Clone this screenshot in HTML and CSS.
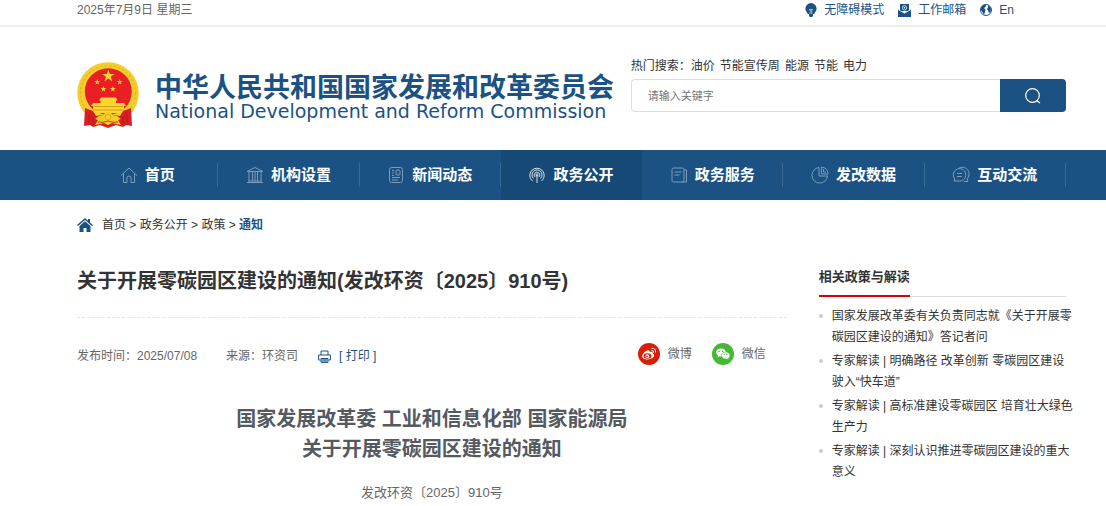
FILE: index.html
```html
<!DOCTYPE html>
<html lang="zh-CN">
<head>
    <meta charset="UTF-8">
    <meta name="viewport" content="width=device-width, initial-scale=1.0">
    <title>关于开展零碳园区建设的通知</title>
    <link rel="stylesheet" href="styles.css">
</head>
<body>
    <div class="topbar">
        <div class="container topbar-inner">
            <span>2025年7月9日 星期三</span>
            <div class="top-links">
                <a href="#">
                    <svg width="12" height="14" viewBox="0 0 12 14"><path fill="#1b5283" d="M6 0a5.600 5.600 0 0 1 5.600 5.600c0 2.200-1.400 3-2.300 5.400H2.700C1.800 8.600.4 7.800.4 5.600A5.600 5.600 0 0 1 6 0z"/><path fill="#1b5283" d="M4 11h4v2L7 14H5l-1-1z"/><path d="M4 6l1.200 1L6 6l.8 1L8 6M5.200 7v4M6.800 7v4" fill="none" stroke="#fff" stroke-width=".6"/></svg>
                    无障碍模式
                </a>
                <a href="#">
                    <svg width="13" height="13" viewBox="0 0 13 13"><path fill="#1b5283" d="M2 0h9v7H2zM0 5l6.500 4L13 5v8H0z"/><path d="M0 5.500l6.500 3.700L13 5.500" fill="none" stroke="#fff" stroke-width=".8"/><circle cx="6.500" cy="3.800" r="2.200" fill="none" stroke="#fff" stroke-width=".7"/><circle cx="6.500" cy="3.800" r=".8" fill="#fff"/></svg>
                    工作邮箱
                </a>
                <a href="#">
                    <svg width="12" height="12" viewBox="0 0 12 12"><circle cx="6" cy="6" r="5.500" fill="#fff" stroke="#1b5283"/><path fill="#1b5283" d="M1 3l3-2.500L6 1 5.500 3 4 4l1.500 1.500L5 8l-1 3-1-2-2-3zM8 1l3 3-.5 4L9 9 8 6.500 7 5l1-1.500z"/></svg>
                    En
                </a>
            </div>
        </div>
    </div>

    <header class="container header">
        <div class="logo">
            <svg class="emblem" width="62" height="66" viewBox="0 0 62 66">
                <circle cx="31" cy="31" r="30.800" fill="#f5ce2b"/>
                <circle cx="31" cy="31" r="27.500" fill="none" stroke="#e3b423" stroke-width="1.200" stroke-dasharray="2.500 2"/>
                <ellipse cx="31.300" cy="29.500" rx="23.500" ry="23.200" fill="#ea1f25"/>
                <g fill="#f9d72c">
                    <path id="star" d="M31.300 7.500l1.500 4.500h4.700l-3.800 2.800 1.400 4.600-3.800-2.800-3.800 2.800 1.400-4.600-3.800-2.800h4.700z"/>
                    <use href="#star" transform="translate(5.900 13.600) scale(.46)"/>
                    <use href="#star" transform="translate(28.300 13.600) scale(.46)"/>
                    <use href="#star" transform="translate(12 20.600) scale(.46)"/>
                    <use href="#star" transform="translate(21.500 20.600) scale(.46)"/>
                    <path d="M24 35.500h15l1.500 3H39V41h8l2 3h-2v4h6v3H10v-3h6v-4h-2l2-3h7.500v-2.500H22z"/>
                </g>
                <path d="M17 44.500h29M16 48h31" stroke="#cf8d17" stroke-width=".8"/>
                <path fill="#d81e22" d="M8 46l8 3 3 5 12-2 12 2 3-5 8-3 1 18-6-1-3 2-7-2-8 3-8-3-7 2-3-2-6 1z"/>
                <path fill="#f5ce2b" d="M22 54l-4 3 3 1-3 5 9-2 4 2 4-2 9 2-3-5 3-1-4-3-9-2z"/>
                <circle cx="31" cy="55" r="5" fill="#f5ce2b"/>
                <circle cx="31" cy="55" r="3" fill="none" stroke="#e3ab1f"/>
                <path d="M21 60q5 1 10-1 5 2 10 1M12 52v10M16 54v9M46 54v9M50 52v10" stroke="#b3181c" stroke-width=".8" fill="none"/>
            </svg>
            <div class="logo-text">
                <div class="logo-cn">中华人民共和国国家发展和改革委员会</div>
                <div class="logo-en">National Development and Reform Commission</div>
            </div>
        </div>
        <form class="search">
            <div class="hot">
                <span>热门搜索：</span>
                <a href="#">油价</a>
                <a href="#">节能宣传周</a>
                <a href="#">能源</a>
                <a href="#">节能</a>
                <a href="#">电力</a>
            </div>
            <div class="search-box">
                <input type="text" placeholder="请输入关键字" aria-label="请输入关键字">
                <button type="button" aria-label="搜索">
                    <svg width="16" height="16" viewBox="0 0 16 16" fill="none" stroke="#fff" stroke-width="1.200"><circle cx="7.500" cy="7.500" r="6.800"/><path d="M11.500 12.500l3.500 2.500"/></svg>
                </button>
            </div>
        </form>
    </header>

    <nav class="nav">
        <ul class="container">
            <li><a href="#">
                <svg width="18" height="18" viewBox="0 0 18 18"><path d="M1 9.500L9 2l8 7.500M3.500 8v8.500H7V12q0-2 2-2t2 2v4.500h3.500V8"/></svg>
                首页</a></li>
            <li><a href="#">
                <svg width="18" height="18" viewBox="0 0 18 18"><path d="M1 5.500L9 1.500l8 4zM3 6v9M6.500 6v9M9 6v9M11.500 6v9M15 6v9M2 15h14M1 16.500h16"/></svg>
                机构设置</a></li>
            <li><a href="#">
                <svg width="18" height="18" viewBox="0 0 18 18"><rect x="2.500" y="1.500" width="13" height="15" rx="2"/><path d="M5 4.500h2M5 7h2M5 9.500h2M5 11.500h8M5 14h6"/><rect x="9" y="4" width="4" height="5" rx="1"/></svg>
                新闻动态</a></li>
            <li class="active"><a href="#">
                <svg width="18" height="18" viewBox="0 0 18 18"><path d="M4.500 15A7.200 7.200 0 1 1 13.500 15M5.500 12.500a5 5 0 1 1 7 0M7 11a2.800 2.800 0 1 1 4 0M9 9v8"/><circle cx="9" cy="9" r="1"/></svg>
                政务公开</a></li>
            <li><a href="#">
                <svg width="18" height="18" viewBox="0 0 18 18"><rect x="2" y="2" width="12" height="14" rx="1.500"/><path d="M4.500 6h7M4.500 9h5M14 4h2.500v12H12"/></svg>
                政务服务</a></li>
            <li><a href="#">
                <svg width="18" height="18" viewBox="0 0 18 18"><path d="M8 1.500A7.800 7.800 0 1 0 16.500 10H8zM10.500 1v7H17q0-6-6.500-7zM12.500 3v3H15"/></svg>
                发改数据</a></li>
            <li><a href="#">
                <svg width="18" height="18" viewBox="0 0 18 18"><path d="M2.800 13A6.300 6.300 0 1 1 11.500 13.800Q10 15 8 15H2.200zM7 2.200C12-1 18 4 17 9q-.4 2.500-1.800 3.800l.8 2.700h-4M5 7.500h5M5 10.500h5"/></svg>
                互动交流</a></li>
        </ul>
    </nav>

    <div class="container breadcrumb">
        <svg width="16" height="14" viewBox="0 0 16 14"><path fill="#1b5283" d="M8 0l3 2.700V1h2v3.500L16 7l-1 1-7-6-7 6-1-1z"/><path fill="#1b5283" d="M8 3.200L13.500 8v6h-4v-4h-3v4h-4V8z"/></svg>
        <div><a href="#">首页</a> &gt; <a href="#">政务公开</a> &gt; <a href="#">政策</a> &gt; <a href="#" class="current">通知</a></div>
    </div>

    <div class="container main">
        <article>
            <h1>关于开展零碳园区建设的通知(发改环资〔2025〕910号)</h1>
            <div class="meta">
                <div class="info">
                    <span>发布时间：2025/07/08</span>
                    <span class="source">来源：环资司</span>
                    <a href="#" class="print">
                        <svg width="13" height="13" viewBox="0 0 13 13"><path d="M3 5V1h7v4M2.500 10H.6V5h11.800v5h-1.900M3 8.500h7v3.900H3z" fill="none" stroke="#1b5283"/><path d="M3 9h7v3H3z" fill="#6d93b5"/></svg>
                        [ 打印 ]
                    </a>
                </div>
                <div class="share">
                    <a href="#">
                        <svg width="22" height="22" viewBox="0 0 22 22"><circle cx="11" cy="11" r="11" fill="#d81e06"/><path fill="#fff" d="M9 7.500c2-.8 3 0 2.600 1.500 2.300-.8 3.800 0 3.200 1.600 2 .7 1.700 2.700.2 4-3 2.700-10.500 2.500-10.800-1.200C4 11.500 6.500 8.500 9 7.500z"/><ellipse cx="9.500" cy="13" rx="4" ry="2.700" fill="#d81e06"/><circle cx="9.300" cy="13.200" r="1.900" fill="#fff"/><circle cx="9" cy="13.500" r=".8" fill="#d81e06"/><path d="M13.500 5.500q4.500-.8 4 4M13.500 7.500q2.300-.3 2 2" fill="none" stroke="#fff"/></svg>
                        微博
                    </a>
                    <a href="#">
                        <svg width="22" height="22" viewBox="0 0 22 22"><circle cx="11" cy="11" r="11" fill="#43b934"/><path fill="#fff" d="M9 5.500c3 0 5 1.800 5 4s-2 4-5 4l-1.500-.2L5.500 14.500l.5-2C2.500 10 4 5.500 9 5.500z"/><path fill="#fff" stroke="#43b934" stroke-width=".6" d="M13.700 9c2.600 0 4.300 1.600 4.300 3.500 0 1.200-.7 2.200-1.600 2.800l.4 1.600-1.800-.9c-3.400.6-5.600-1.300-5.600-3.500S11.200 9 13.700 9z"/><g fill="#43b934"><circle cx="7.300" cy="8.400" r=".7"/><circle cx="10.600" cy="8.400" r=".7"/><circle cx="12.300" cy="11.600" r=".6"/><circle cx="15" cy="11.600" r=".6"/></g></svg>
                        微信
                    </a>
                </div>
            </div>
            <h2>国家发展改革委 工业和信息化部 国家能源局<br>关于开展零碳园区建设的通知</h2>
            <p class="doc-number">发改环资〔2025〕910号</p>
        </article>
        <aside>
            <div class="aside-title"><h3>相关政策与解读</h3></div>
            <ul class="related">
                <li><a href="#">国家发展改革委有关负责同志就《关于开展零碳园区建设的通知》答记者问</a></li>
                <li><a href="#">专家解读 | 明确路径 改革创新 零碳园区建设驶入“快车道”</a></li>
                <li><a href="#">专家解读 | 高标准建设零碳园区 培育壮大绿色生产力</a></li>
                <li><a href="#">专家解读 | 深刻认识推进零碳园区建设的重大意义</a></li>
            </ul>
        </aside>
    </div>
</body>
</html>
```
FILE: styles.css
```css
* {
    box-sizing: border-box;
}
body {
    font-family: "Liberation Sans", "Noto Sans CJK SC", sans-serif;
    font-size: 12px;
    line-height: 20px;
    margin: 0;
    color: #333;
    background: #fff;
}
a {
    color: inherit;
    text-decoration: none;
}
ul {
    list-style: none;
    margin: 0;
    padding: 0;
}
h1, h2, h3, p {
    margin: 0;
}
svg {
    flex: none;
}
.container {
    padding: 0 40px 0 77px;
}

/* 顶部 */
.topbar {
    border-bottom: 2px solid #e9eef2;
    color: #666;
}
.topbar-inner {
    display: flex;
    justify-content: space-between;
    padding-bottom: 5px;
}
.top-links {
    display: flex;
    gap: 14px;
    padding-right: 52px;
    color: #1b5283;
}
.top-links a {
    display: flex;
    align-items: center;
    gap: 7px;
}

/* 标志和搜索 */
.header {
    display: grid;
    grid-template-columns: 56% 44%;
    height: 123px;
    padding-top: 29px;
    align-items: start;
}
.logo {
    display: flex;
    gap: 16px;
    padding-top: 6px;
    color: #1b5283;
    white-space: nowrap;
}
.logo-text {
    padding-top: 12px;
}
.logo-cn {
    font-size: 27px;
    font-weight: bold;
    line-height: 28px;
}
.logo-en {
    font-family: "DejaVu Sans", sans-serif;
    font-size: 19px;
    line-height: 18px;
}
.hot {
    display: flex;
    gap: 5px;
    margin-bottom: 3px;
}
.hot span {
    margin-right: -5px;
}
.search-box {
    display: flex;
    height: 33px;
}
.search-box input {
    flex: 1;
    min-width: 0;
    padding: 0 16px;
    border: 1px solid #ddd;
    border-right: 0;
    border-radius: 4px 0 0 4px;
    font-family: inherit;
    font-size: 11px;
}
.search-box input::placeholder {
    color: #757575;
}
.search-box button {
    display: flex;
    align-items: center;
    justify-content: center;
    width: 66px;
    border: 0;
    border-radius: 0 4px 4px 0;
    background: #1b5283;
}

/* 导航 */
.nav {
    background: #1b5283;
}
.nav ul {
    display: grid;
    grid-template-columns: repeat(7, 1fr);
}
.nav li {
    display: flex;
    align-items: center;
    height: 50px;
}
.nav a {
    flex: 1;
    display: flex;
    align-items: center;
    justify-content: center;
    gap: 7px;
    height: 24px;
    border-right: 1px solid #3c6c96;
    color: #fff;
    font-size: 15px;
    font-weight: bold;
}
.nav svg {
    fill: none;
    stroke: #7c9dbb;
    stroke-width: 1;
}
.nav .active {
    background: #164976;
}
.nav .active a {
    border-color: transparent;
}
.nav .active svg {
    stroke: #d5e0e9;
}

.breadcrumb {
    display: flex;
    align-items: center;
    gap: 9px;
    height: 50px;
}
.current {
    color: #1b5283;
    font-weight: bold;
}

/* 正文 */
.main {
    display: grid;
    grid-template-columns: 1fr 25%;
    gap: 32px;
}
h1 {
    padding: 16px 0 21px;
    border-bottom: 1px dashed #e5e5e5;
    font-size: 20px;
    line-height: 30px;
}
.meta {
    display: flex;
    justify-content: space-between;
    padding: 24px 21px 0 0;
    color: #666;
}
.info {
    display: flex;
    padding-top: 4px;
}
.source {
    margin-left: 29px;
}
.print {
    display: flex;
    align-items: center;
    gap: 8px;
    margin-left: 20px;
    color: #1b5283;
}
.share {
    display: flex;
    gap: 20px;
}
.share a {
    display: flex;
    align-items: center;
    gap: 8px;
}
h2 {
    padding-top: 38px;
    color: #555960;
    font-size: 20px;
    line-height: 30px;
    text-align: center;
}
.doc-number {
    padding-top: 19px;
    color: #666;
    font-size: 13px;
    text-align: center;
}

/* 右侧栏 */
.aside-title {
    display: flex;
    margin-top: 12px;
    border-bottom: 1px solid #ddd;
}
h3 {
    padding: 5px 0 8px;
    margin-bottom: -1px;
    border-bottom: 2px solid #d7000f;
    font-size: 13px;
    font-weight: bold;
}
.related {
    display: grid;
    gap: 3px;
    margin-right: -8px;
    padding-top: 9px;
    line-height: 21px;
}
.related li {
    position: relative;
    padding-left: 13px;
}
.related li::before {
    content: "";
    position: absolute;
    left: 0;
    top: 8px;
    width: 4px;
    height: 4px;
    border-radius: 50%;
    background: #ccc;
}
```
